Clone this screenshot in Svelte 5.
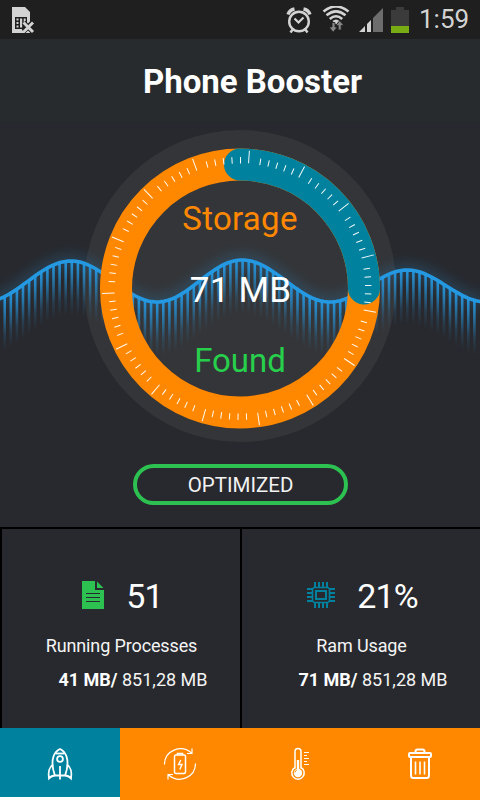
<script lang="ts">
	interface Tick {
		angle: number;
		inner: number;
		outer: number;
	}

	interface Bar {
		x: number;
		y: number;
		height: number;
	}

	let activeTab = $state('boost');

	const tabs = ['boost', 'battery', 'cooler', 'clean'];

	const stats = [
		{ icon: 'file', value: '51', label: 'Running Processes', used: '41 MB/', total: '851,28 MB' },
		{ icon: 'chip', value: '21%', label: 'Ram Usage', used: '71 MB/', total: '851,28 MB' }
	];

	// Peaks and troughs of the wave, left to right
	const wavePoints = [
		[-16, 302],
		[71, 261],
		[157, 302],
		[242, 260],
		[330, 302],
		[407, 270],
		[486, 302]
	];

	function waveY(x: number) {
		for (let i = 1; i < wavePoints.length; i++) {
			const [x0, y0] = wavePoints[i - 1];
			const [x1, y1] = wavePoints[i];
			if (x <= x1) {
				const t = (x - x0) / (x1 - x0);
				return y0 + ((y1 - y0) * (1 - Math.cos(Math.PI * t))) / 2;
			}
		}
		return 302;
	}

	function buildWave() {
		let d = '';
		for (let x = -4; x <= 484; x += 4) {
			d += `${d ? 'L' : 'M'}${x} ${waveY(x).toFixed(2)}`;
		}
		return d;
	}

	function buildBars() {
		const list: Bar[] = [];
		for (let x = 4.7; x < 480; x += 6.1) {
			list.push({ x, y: waveY(x), height: 54 });
		}
		return list;
	}

	// 15 long marks with five short ones after each
	function buildTicks() {
		const list: Tick[] = [];
		for (let i = 0; i < 15; i++) {
			const start = 3.9 + i * 24;
			list.push({ angle: start, inner: 125.5, outer: 138 });
			for (let j = 0; j < 5; j++) {
				list.push({ angle: start + 5.2 + j * 3.78, inner: 125, outer: 131.5 });
			}
		}
		return list;
	}

	const wave = buildWave();
	const bars = buildBars();
	const ticks = buildTicks();
</script>

<div class="screen">
	<div class="status-bar">
		<svg class="sim" width="24" height="28" viewBox="0 0 24 28">
			<path d="M1 1h13l5 5v21H1z" fill="#d3d3d3" />
			<path d="M4 11h12v12H4z" fill="#1f1f1f" />
			<path d="M5.500 12.500h2v2h-2zM5.500 16h2v2h-2zM5.500 19.500h2v2h-2zM9 12.500h2.200v9H9zM12.700 12.500h2v4h-2z" fill="#d3d3d3" />
			<path d="M12.500 16.500l9 9M21.500 16.500l-9 9" stroke="#1f1f1f" stroke-width="5" />
			<path d="M12.500 16.500l9.500 9.500M22 16.500l-9.500 9.500" stroke="#d3d3d3" stroke-width="2.900" />
		</svg>
		<div class="indicators">
			<svg class="alarm" width="26" height="28" viewBox="0 0 26 28" fill="none" stroke="#d3d3d3">
				<circle cx="13" cy="15.500" r="9.800" stroke-width="2.400" />
				<path d="M8.500 12.500l4 4 5-5" stroke-width="2.200" />
				<path d="M2 8.500Q3.500 4 8.500 3M24 8.500Q22.500 4 17.500 3" stroke-width="3.400" />
				<path d="M7 23l-2.500 3.500M19 23l2.500 3.500" stroke-width="2.400" />
			</svg>
			<svg class="wifi" width="28" height="28" viewBox="0 0 28 28" fill="none" stroke="#d3d3d3">
				<path d="M1.500 5.500Q14-4.500 26.500 5.500M4.500 9.300Q14 1.500 23.500 9.300M7.800 13Q14 7.500 20.200 13" stroke-width="2.600" />
				<path d="M10.500 15Q14 12 17.500 15L14 18.500z" fill="#d3d3d3" stroke="none" />
				<path d="M10 16.500h3v4.500h2.300l-4.100 5.300L7 21h3zM16.200 24h3v-4.500h2.600L17.800 14.500l-4 5h2.400z" fill="#858585" stroke="#1f1f1f" stroke-width="0.800" />
			</svg>
			<svg class="signal" width="26" height="26" viewBox="0 0 26 26">
				<path d="M1 25l6-6v6zM9 25V17l4-4v12z" fill="#d3d3d3" />
				<path d="M15 25V11L25 1v24z" fill="#6d6d6d" />
			</svg>
			<svg width="18" height="26" viewBox="0 0 18 26">
				<path d="M0 3h5V0h8v3h5v16H0z" fill="#3b3b3b" />
				<path d="M0 19h18v7H0z" fill="#78ab14" />
			</svg>
			<span class="clock">1:59</span>
		</div>
	</div>

	<header>
		<h1>Phone Booster</h1>
	</header>

	<section class="gauge">
		<svg class="dial" width="480" height="330" viewBox="0 122 480 330">
			<defs>
				<linearGradient id="bar-fade" x1="0" y1="0" x2="0" y2="1">
					<stop offset="0" stop-color="#2595dc" />
					<stop offset="0.3" stop-color="#2595dc" stop-opacity="0.7" />
					<stop offset="0.7" stop-color="#2595dc" stop-opacity="0.18" />
					<stop offset="1" stop-color="#2595dc" stop-opacity="0" />
				</linearGradient>
				<filter id="glow" x="-10%" y="-80%" width="120%" height="260%">
					<feGaussianBlur stdDeviation="7" />
				</filter>
			</defs>

			<circle cx="240" cy="286" r="156" fill="#343538" />

			<path d={wave} fill="none" stroke="#2595dc" stroke-width="9" opacity="0.32" filter="url(#glow)" />
			{#each bars as bar}
				<rect x={bar.x - 1.3} y={bar.y} width="2.600" height={bar.height} fill="url(#bar-fade)" />
			{/each}
			<path d={wave} fill="none" stroke="#2499e2" stroke-width="3.600" />

			<circle cx="240" cy="288.500" r="124" fill="none" stroke="#ff8800" stroke-width="32" />
			<path
				d="M240 164.500A124 124 0 0 1 364 288.500"
				fill="none"
				stroke="#00829e"
				stroke-width="32"
				stroke-linecap="round"
			/>
			<g stroke="#fff" stroke-width="1" opacity="0.95">
				{#each ticks as tick}
					<line
						x1="240"
						y1={288.5 - tick.inner}
						x2="240"
						y2={288.5 - tick.outer}
						transform="rotate({tick.angle} 240 288.5)"
					/>
				{/each}
			</g>
		</svg>
		<div class="readout">
			<span class="storage">Storage</span>
			<span class="amount">71 MB</span>
			<span class="found">Found</span>
		</div>
	</section>

	<button class="optimize">OPTIMIZED</button>

	<section class="stats">
		{#each stats as stat}
			<div class="stat">
				<div class="stat-top">
					{#if stat.icon === 'file'}
						<svg class="file" width="22" height="28" viewBox="0 0 22 28">
							<path d="M0 0h13v9h9v19H0z" fill="#2cc150" />
							<path d="M15 0.500L21.500 7H15z" fill="#2cc150" />
							<path d="M4 12.500h14M4 16.500h14M4 20.500h14" stroke="#28292e" stroke-width="1.200" />
						</svg>
					{:else}
						<svg class="chip" width="28" height="26" viewBox="0 0 28 26" fill="none" stroke="#00829e">
							<path d="M8 0v5M12 0v5M16 0v5M20 0v5M8 21v5M12 21v5M16 21v5M20 21v5" stroke-width="2" />
							<path d="M0 7h6M0 11h6M0 15h6M0 19h6M22 7h6M22 11h6M22 15h6M22 19h6" stroke-width="2" />
							<path d="M7 5.500h14l1.500 1.500v12l-1.500 1.500H7L5.500 19V7z" stroke-width="1.600" />
							<rect x="9" y="9" width="10" height="8" stroke-width="2" />
						</svg>
					{/if}
					<span class="value">{stat.value}</span>
				</div>
				<div class="label">{stat.label}</div>
				<div class="usage"><b>{stat.used}</b> {stat.total}</div>
			</div>
		{/each}
	</section>

	<nav>
		{#each tabs as tab}
			<button class="tab" class:active={activeTab === tab} aria-label={tab} onclick={() => (activeTab = tab)}>
				<svg width="34" height="34" viewBox="0 0 34 34" fill="none" stroke="#fff">
					{#if tab === 'boost'}
						<g stroke-width="1.800">
							<path d="M12 29C9.500 22 9 14 10.500 9.500Q12.500 4 17 2Q21.500 4 23.500 9.500C25 14 24.500 22 22 29" />
							<path d="M12.500 6.500h9" />
							<circle cx="17" cy="12" r="2.900" />
							<path d="M10 17.500C5.500 21 5 25 6 31.500Q8.500 28.500 12 28.500H22Q25.500 28.500 28 31.500C29 25 28.500 21 24 17.500" />
							<path d="M17 19v13.500" />
						</g>
					{:else if tab === 'battery'}
						<g stroke-width="1.200">
							<path d="M1.500 17.500C1.500 3.500 18-3 28.500 6M29 1.500V6.500H24" />
							<path d="M32.500 16.500C32.500 30.500 16 37 5.500 28M5 32.500V27.500H10" />
							<rect x="11.500" y="8" width="11" height="18.500" rx="1.500" stroke-width="1.500" />
							<path d="M14.500 8V6.500h5V8" stroke-width="1.500" />
							<path d="M17.800 13l-2.300 4.500h3.500L16.800 22.500" stroke-width="1.400" />
						</g>
					{:else if tab === 'cooler'}
						<path d="M12 21.500V4.500a3 3 0 0 1 6 0v17" stroke-width="1.500" />
						<path d="M12 20.500a6.200 6.200 0 1 0 6 0" stroke-width="1.500" />
						<circle cx="15" cy="26" r="4.200" fill="#fff" stroke="none" />
						<path d="M15 13v10" stroke-width="2.400" />
						<path d="M11.800 25.500q.500-2 2-2.500" stroke="#ff8800" stroke-width="1" />
						<path d="M21 5.500h5M21 8.500h3M21 11.500h5M21 14.500h3M21 17.500h5" stroke-width="1.200" />
					{:else}
						<g stroke-width="2">
							<rect x="6" y="6" width="22" height="4" rx="1" />
							<path d="M12.500 6V4.500Q12.500 2.500 14.500 2.500h5Q21.500 2.500 21.500 4.500V6" />
							<path d="M8 10v18.500Q8 31 10.500 31h13Q26 31 26 28.500V10" />
							<path d="M12.500 14.500v13M17 14.500v13M21.500 14.500v13" stroke-width="1.600" />
						</g>
					{/if}
				</svg>
			</button>
		{/each}
	</nav>
</div>

<style>
	:global(body) {
		margin: 0;
		background: #28292e;
	}

	.screen {
		width: 480px;
		height: 800px;
		display: flex;
		flex-direction: column;
		overflow: hidden;
		background: #28292e;
		color: #fff;
		font-family: Roboto, 'Noto Sans', sans-serif;
	}

	button {
		border: none;
		padding: 0;
		margin: 0;
		background: none;
		color: inherit;
		font-family: inherit;
		cursor: pointer;
	}

	svg {
		display: block;
		flex: none;
	}

	.status-bar {
		height: 39px;
		flex: none;
		display: flex;
		justify-content: space-between;
		align-items: center;
		padding: 0 11px;
		box-sizing: border-box;
		background: #1f1f1f;
	}

	.indicators {
		display: flex;
		align-items: center;
	}

	.alarm {
		margin-right: 10px;
	}

	.wifi {
		margin-right: 8px;
	}

	.signal {
		margin-right: 7px;
	}

	.clock {
		width: 50px;
		margin-left: 10px;
		font-size: 26px;
		line-height: 37px;
		color: #d3d3d3;
		white-space: nowrap;
	}

	header {
		height: 83px;
		flex: none;
		background: #272b2e;
		text-align: center;
		padding-left: 25px;
	}

	h1 {
		margin: 0;
		font-size: 33px;
		line-height: 86px;
		font-weight: 700;
		white-space: nowrap;
	}

	.gauge {
		display: grid;
		height: 330px;
		flex: none;
	}

	.dial,
	.readout {
		grid-area: 1 / 1;
	}

	.readout {
		z-index: 1;
		display: flex;
		flex-direction: column;
		align-items: center;
		padding-top: 61px;
		line-height: 71px;
		white-space: nowrap;
	}

	.storage {
		font-size: 33px;
		letter-spacing: 0.3px;
		color: #ff8800;
	}

	.amount {
		padding: 1px 0 0 1px;
		margin-bottom: -1px;
		font-size: 35px;
		letter-spacing: 0.2px;
	}

	.found {
		font-size: 33px;
		color: #27cf4c;
	}

	.optimize {
		width: 215px;
		height: 41px;
		flex: none;
		margin: 12px 0 22px 133px;
		box-sizing: border-box;
		border: 4px solid #2cc150;
		border-radius: 21px;
		padding-top: 1px;
		font-size: 20.5px;
		line-height: 32px;
		color: #f2f2f2;
	}

	.stats {
		display: grid;
		grid-template-columns: 1fr 1fr;
		height: 201px;
		flex: none;
		box-sizing: border-box;
		border-top: 2px solid #000;
	}

	.stat {
		border-left: 2px solid #000;
		padding-top: 46px;
		text-align: center;
		white-space: nowrap;
	}

	.stat-top {
		display: flex;
		align-items: center;
		justify-content: center;
		height: 40px;
		gap: 22px;
		padding-left: 3px;
		font-size: 34px;
		letter-spacing: -0.8px;
	}

	.value {
		padding-top: 2px;
	}

	.label {
		margin-top: 19px;
		padding-left: 1px;
		font-size: 18px;
		line-height: 24px;
		letter-spacing: -0.13px;
		color: #f4f4f4;
	}

	.usage {
		margin-top: 10px;
		padding-left: 24px;
		font-size: 18px;
		line-height: 24px;
		color: #f4f4f4;
	}

	.usage b {
		color: #fff;
	}

	nav {
		display: grid;
		grid-template-columns: repeat(4, 1fr);
		height: 72px;
		flex: none;
		background: #ff8800;
	}

	.tab {
		display: flex;
		align-items: center;
		justify-content: center;
	}

	.tab.active {
		box-sizing: border-box;
		background: #00829e;
		border-bottom: 3px solid #fff;
		padding-top: 3px;
	}
</style>
